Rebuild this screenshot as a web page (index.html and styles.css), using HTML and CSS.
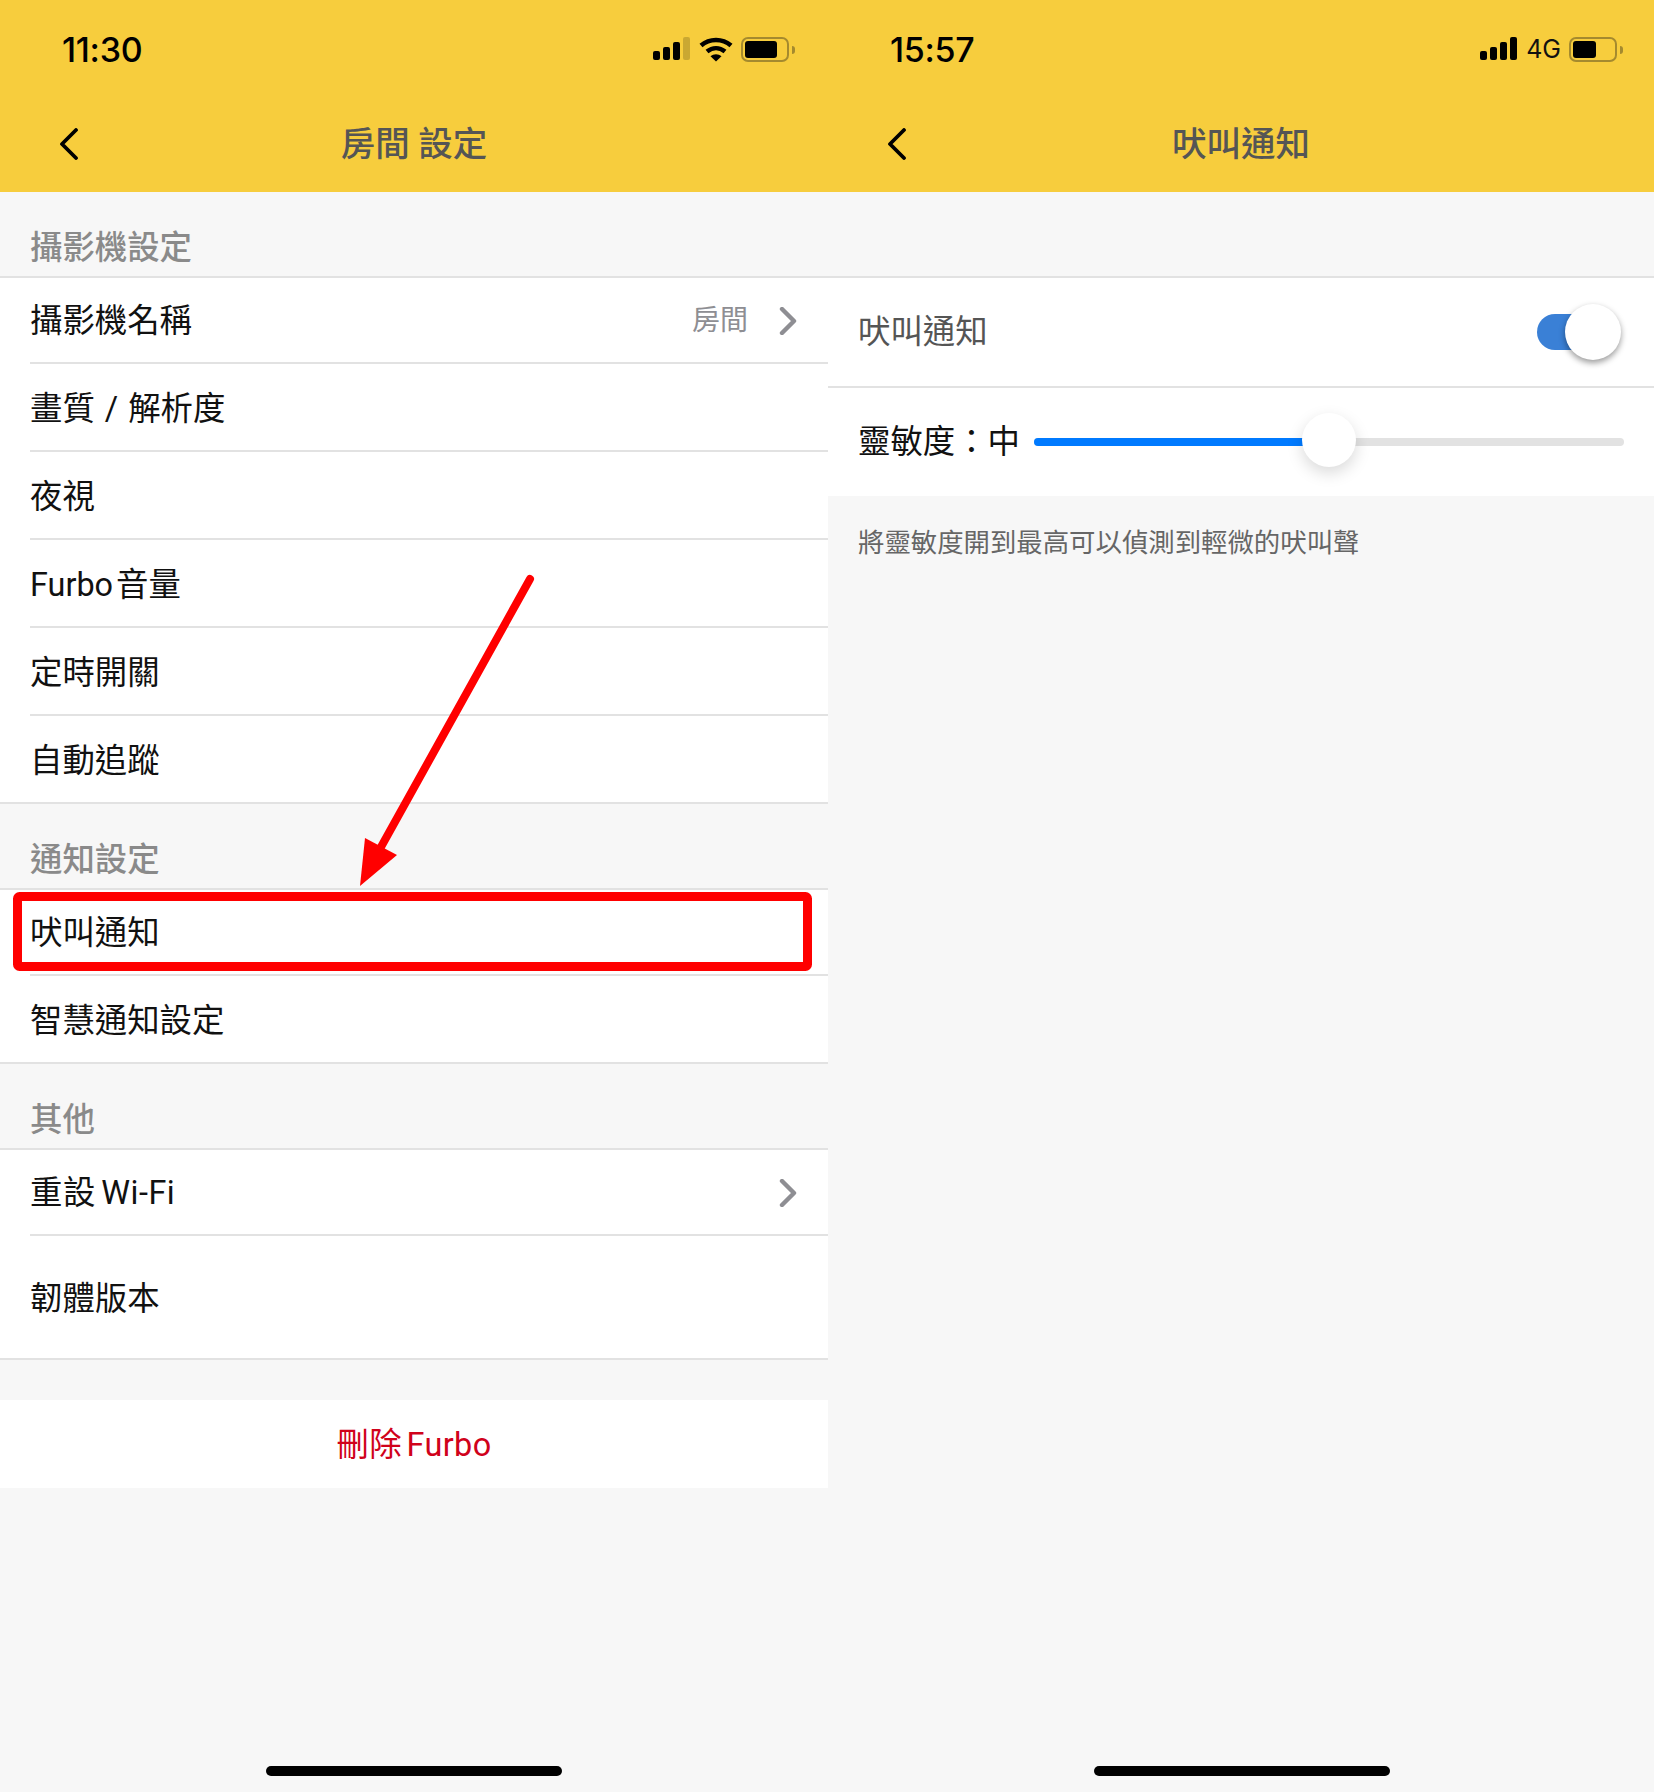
FILE: index.html
```html
<!DOCTYPE html>
<html lang="zh-Hant">
<head>
<meta charset="utf-8">
<title>Furbo 設定</title>
<link rel="stylesheet" href="styles.css">
</head>
<body>
<main class="screens">
  <section class="panel panel-left">
    <header class="appbar">
      <div class="status">
        <span class="time">11:30</span>
        <div class="status-icons icons-left">
          <svg class="signal" width="38" height="24" viewBox="0 0 38 24"><rect x="0" y="14" width="7" height="9" rx="2"/><rect x="10" y="10" width="7" height="13" rx="2"/><rect x="20" y="5" width="7" height="18" rx="2"/><rect class="faded" x="30" y="0" width="7" height="23" rx="2"/></svg>
          <svg class="wifi" width="34" height="25" viewBox="0 0 34 25"><path d="M2 8.500C10.500 1 23.500 1 32 8.500" fill="none" stroke="#000" stroke-width="4.500" stroke-linecap="butt"/><path d="M8 14.500C13.500 10 20.500 10 26 14.500" fill="none" stroke="#000" stroke-width="4.500"/><path d="M17 24.500L11.500 19.300C14.500 16.600 19.500 16.600 22.500 19.300Z"/></svg>
          <span class="battery"><span class="battery-fill battery-full"></span></span>
        </div>
      </div>
      <div class="nav">
        <svg class="back" width="20" height="32" viewBox="0 0 20 32"><path d="M17 2L3 16L17 30" fill="none" stroke="#000" stroke-width="3.800" stroke-linecap="round" stroke-linejoin="round"/></svg>
        <h1 class="title">房間 設定</h1>
      </div>
    </header>

    <h2 class="section-title">攝影機設定</h2>
    <ul class="group">
      <li class="row row-first"><span>攝影機名稱</span><span class="row-end"><span class="value">房間</span><svg class="chev" width="18" height="28" viewBox="0 0 18 28"><path d="M3 2L15 14L3 26" fill="none" stroke="#8e8e93" stroke-width="4.400" stroke-linecap="round" stroke-linejoin="round"/></svg></span></li>
      <li class="row"><span class="wide-words">畫質 / 解析度</span></li>
      <li class="row"><span>夜視</span></li>
      <li class="row"><span class="furbo-words">Furbo 音量</span></li>
      <li class="row"><span>定時開關</span></li>
      <li class="row row-last"><span>自動追蹤</span></li>
    </ul>

    <h2 class="section-title">通知設定</h2>
    <ul class="group">
      <li class="row row-first"><span>吠叫通知</span></li>
      <li class="row row-last"><span>智慧通知設定</span></li>
    </ul>

    <h2 class="section-title">其他</h2>
    <ul class="group">
      <li class="row row-first"><span class="tight-words">重設 Wi-Fi</span><span class="row-end"><svg class="chev" width="18" height="28" viewBox="0 0 18 28"><path d="M3 2L15 14L3 26" fill="none" stroke="#8e8e93" stroke-width="4.400" stroke-linecap="round" stroke-linejoin="round"/></svg></span></li>
      <li class="row row-last row-tall"><span>韌體版本</span></li>
    </ul>

    <button class="delete" type="button">刪除 Furbo</button>
    <div class="home-bar"></div>

    <svg class="annotation" width="828" height="1000" viewBox="0 0 828 1000">
      <rect class="anno-box" x="17.500" y="896.500" width="790" height="70" rx="2"/>
      <path class="anno-line" d="M530 579L381 847"/>
      <path class="anno-head" d="M360 886L365 838L397 855Z"/>
    </svg>
  </section>

  <section class="panel panel-right">
    <header class="appbar">
      <div class="status">
        <span class="time">15:57</span>
        <div class="status-icons icons-right">
          <svg class="signal" width="38" height="24" viewBox="0 0 38 24"><rect x="0" y="14" width="7" height="9" rx="2"/><rect x="10" y="10" width="7" height="13" rx="2"/><rect x="20" y="5" width="7" height="18" rx="2"/><rect x="30" y="0" width="7" height="23" rx="2"/></svg>
          <span class="net">4G</span>
          <span class="battery"><span class="battery-fill battery-mid"></span></span>
        </div>
      </div>
      <div class="nav">
        <svg class="back" width="20" height="32" viewBox="0 0 20 32"><path d="M17 2L3 16L17 30" fill="none" stroke="#000" stroke-width="3.800" stroke-linecap="round" stroke-linejoin="round"/></svg>
        <h1 class="title">吠叫通知</h1>
      </div>
    </header>

    <div class="spacer-top"></div>
    <div class="bark-row">
      <span class="bark-label">吠叫通知</span>
      <span class="toggle"><span class="toggle-track"></span><span class="toggle-thumb"></span></span>
    </div>
    <div class="sense-row">
      <span class="sense-label">靈敏度：中</span>
      <span class="slider"><span class="slider-fill"></span><span class="slider-thumb"></span></span>
    </div>
    <p class="hint">將靈敏度開到最高可以偵測到輕微的吠叫聲</p>
    <div class="home-bar"></div>
  </section>
</main>
</body>
</html>
```
FILE: styles.css
```css
* { box-sizing: border-box; }
html, body { margin: 0; padding: 0; }
body {
  background: #f7f7f7;
  font-family: Roboto, "Noto Sans CJK TC", sans-serif;
  color: #111;
}
.screens { display: flex; width: 1654px; height: 1792px; overflow: hidden; }
.panel { position: relative; display: flex; flex-direction: column; height: 1792px; background: #f7f7f7; }
.panel-left { width: 828px; }
.panel-right { width: 826px; }

.appbar { height: 192px; background: #f7cd3d; flex: none; }
.status { height: 100px; display: flex; align-items: center; justify-content: space-between; padding: 0 0 2px 62px; }
.time { font-family: Inter, sans-serif; font-size: 34px; font-weight: 500; color: #000; letter-spacing: -0.3px; }
.status-icons { display: flex; align-items: center; }
.icons-left { padding-right: 39px; }
.icons-right { padding-right: 37px; }
.signal { fill: #000; display: block; }
.signal .faded { fill: #000; opacity: .18; }
.icons-left .signal { margin-right: 8px; }
.wifi { display: block; margin-right: 8px; }
.net { font-family: Inter, sans-serif; font-size: 25px; color: #111; margin: 0 8px 0 8px; }
.battery { position: relative; display: block; width: 48px; height: 25px; border: 2px solid #a58a2e; border-radius: 7px; padding: 2px; }
.battery::after { content: ""; position: absolute; left: 49px; top: 7px; width: 3px; height: 8px; background: #a58a2e; border-radius: 0 3px 3px 0; }
.battery-fill { display: block; height: 17px; background: #000; border-radius: 3px; }
.battery-full { width: 32px; }
.battery-mid { width: 23px; }

.nav { position: relative; height: 88px; display: flex; align-items: center; justify-content: center; }
.back { position: absolute; left: 59px; top: 28px; }
.title { margin: 0; font-size: 34.5px; font-weight: 500; color: #555; line-height: 44px; }

.section-title { margin: 0; height: 84px; padding: 34px 0 6px 30px; font-size: 32.4px; line-height: 44px; font-weight: 500; color: #8a8a8a; }
.group { margin: 0; padding: 0; list-style: none; background: #fff; border-top: 2px solid #e2e2e2; border-bottom: 2px solid #e2e2e2; }
.row { position: relative; display: flex; align-items: center; justify-content: space-between; height: 88px; padding: 1px 30px 0 30px; font-size: 32.4px; line-height: 44px; font-weight: 400; color: #111; }
.row::after { content: ""; position: absolute; left: 30px; right: 0; bottom: 0; height: 2px; background: #e2e2e2; }
.row-first { height: 86px; padding-top: 0; }
.row-last { height: 86px; padding-top: 3px; }
.row-last::after { display: none; }
.row-tall { height: 122px; }
.row-end { display: flex; align-items: center; }
.value { font-size: 28px; color: #8e8e93; margin-right: 31px; }
.chev { display: block; margin-right: 1px; }
.wide-words { word-spacing: 2px; }
.tight-words { word-spacing: -3px; letter-spacing: .5px; }
.furbo-words { word-spacing: -5px; }

.delete { display: block; width: 100%; height: 88px; margin-top: 40px; padding: 2px 0 0; border: 0; background: #fff; color: #d0021b; font: 400 32.4px/44px Roboto, "Noto Sans CJK TC", sans-serif; word-spacing: -4px; letter-spacing: .4px; }

.home-bar { width: 296px; height: 10px; border-radius: 5px; background: #000; margin: auto auto 16px; flex: none; }
.panel-right .home-bar { margin-left: 266px; }

.annotation { position: absolute; left: 0; top: 0; pointer-events: none; }
.anno-box { fill: none; stroke: #ff0000; stroke-width: 9; }
.anno-line { fill: none; stroke: #ff0000; stroke-width: 8; stroke-linecap: round; }
.anno-head { fill: #ff0000; }

.spacer-top { height: 84px; flex: none; }
.bark-row { height: 112px; flex: none; display: flex; align-items: center; justify-content: space-between; background: #fff; border-top: 2px solid #e2e2e2; border-bottom: 2px solid #e2e2e2; padding: 0 33px 0 30px; }
.bark-label { font-size: 32.4px; line-height: 44px; color: #555; }
.toggle { position: relative; display: block; width: 84px; height: 56px; }
.toggle-track { position: absolute; left: 0; top: 10px; width: 60px; height: 36px; border-radius: 18px; background: #3a80d6; }
.toggle-thumb { position: absolute; right: 0; top: 0; width: 56px; height: 56px; border-radius: 50%; background: #fff; box-shadow: 0 3px 6px rgba(0,0,0,.4); }
.sense-row { height: 108px; flex: none; display: flex; align-items: center; background: #fff; padding: 0 30px 0 30px; }
.sense-label { font-size: 32.4px; line-height: 44px; color: #111; white-space: nowrap; width: 176px; flex: none; }
.slider { position: relative; display: block; flex: 1; height: 8px; background: #e2e2e2; border-radius: 4px; }
.slider-fill { position: absolute; left: 0; top: 0; height: 8px; width: 290px; background: #007aff; border-radius: 4px 0 0 4px; }
.slider-thumb { position: absolute; left: 268px; top: -25px; width: 54px; height: 54px; border-radius: 50%; background: #fff; box-shadow: 0 6px 16px rgba(0,0,0,.15); }
.hint { margin: 0; padding: 26px 30px 0; font-size: 26.4px; line-height: 42px; color: #666; }
```
